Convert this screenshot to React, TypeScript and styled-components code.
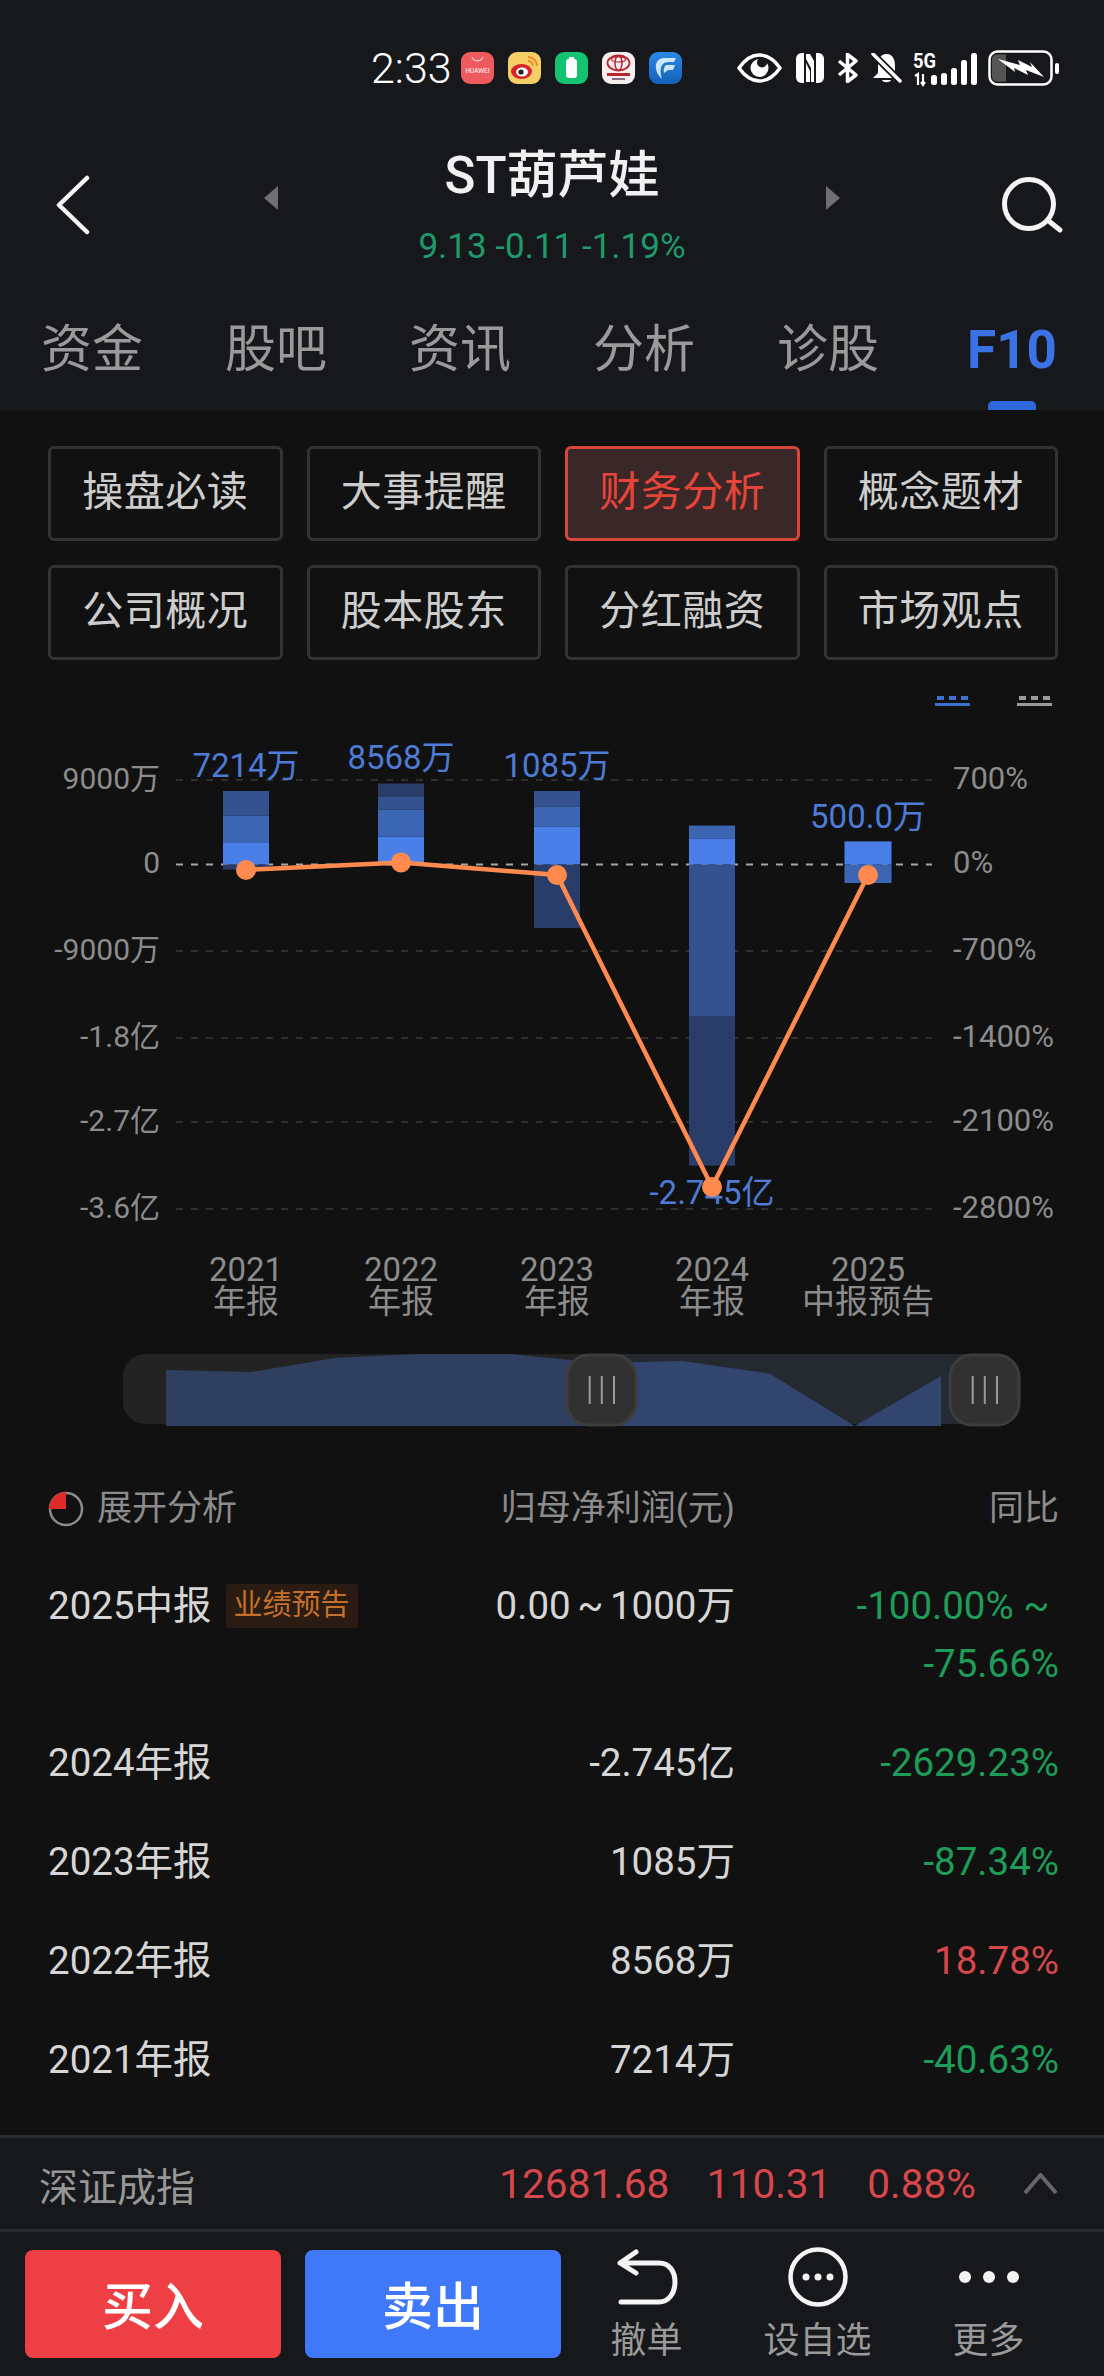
import styled, { createGlobalStyle } from 'styled-components'

const FONT = `Roboto, 'Noto Sans CJK SC', sans-serif`
const GRAY = '#8c8c8c'
const GREEN = '#1e9c58'
const RED = '#d8474c'
const ORANGE = '#ff8a50'

const GlobalStyle = createGlobalStyle`
  html, body {
    margin: 0;
    background: #111;
  }
  * {
    box-sizing: border-box;
  }
`

const Page = styled.div`
  width: 1104px;
  height: 2376px;
  display: flex;
  flex-direction: column;
  overflow: hidden;
  background: #111;
  font-family: ${FONT};
`

const Top = styled.header`
  background: #17181b;
  flex: none;
`

const StatusBar = styled.div`
  height: 100px;
  display: flex;
  align-items: center;
  padding: 36px 0 0 371px;
  color: #fff;
`

const Clock = styled.span`
  width: 90px;
  font-size: 43px;
  font-weight: 300;
  line-height: 48px;
`

const AppIcons = styled.div`
  display: flex;
  gap: 14px;
  margin-right: 55px;
`

const SysIcons = styled.div`
  display: flex;
  align-items: center;
`

const SysIcon = styled.svg<{ $gap?: number }>`
  display: block;
  margin-right: ${p => p.$gap ?? 0}px;
`

const Nav = styled.div`
  height: 170px;
  display: grid;
  grid-template-columns: 264px 14px 1fr 14px 264px;
`

const NavIcon = styled.svg<{ $top: number; $left: number }>`
  display: block;
  margin-top: ${p => p.$top}px;
  margin-left: ${p => p.$left}px;
`

const Quote = styled.div`
  margin-top: 46px;
  text-align: center;
`

const Title = styled.div`
  font-size: 51px;
  font-weight: 500;
  line-height: 60px;
  color: #f1f1f1;
`

const Price = styled.div`
  margin-top: 19px;
  font-size: 35px;
  line-height: 44px;
  color: #1f9a6c;
`

const Tabs = styled.nav`
  height: 140px;
  display: flex;
  padding-top: 50px;
`

const Tab = styled.div<{ $active?: boolean }>`
  position: relative;
  flex: 1;
  height: 90px;
  line-height: 60px;
  text-align: center;
  font-size: ${p => (p.$active ? 53 : 51)}px;
  font-weight: ${p => (p.$active ? 700 : 400)};
  color: ${p => (p.$active ? '#3b73e6' : '#9a9a9a')};

  &::after {
    content: '';
    display: ${p => (p.$active ? 'block' : 'none')};
    position: absolute;
    left: 68px;
    bottom: 0;
    width: 48px;
    height: 9px;
    border-radius: 5px 5px 0 0;
    background: #2f67dc;
  }
`

const Body = styled.main`
  flex: 1;
  min-height: 0;
  overflow: hidden;
`

const Shortcuts = styled.div`
  display: grid;
  grid-template-columns: repeat(4, 1fr);
  gap: 24px;
  padding: 36px 46px 0 48px;
`

const Shortcut = styled.div<{ $active?: boolean }>`
  height: 95px;
  padding-bottom: 11px;
  display: flex;
  align-items: center;
  justify-content: center;
  font-size: 41px;
  letter-spacing: 0.5px;
  border-radius: 6px;
  border: 3px solid ${p => (p.$active ? '#d8453a' : '#333')};
  background: ${p => (p.$active ? '#3a2828' : 'transparent')};
  color: ${p => (p.$active ? '#e8453a' : '#cdcdcd')};
`

const Chart = styled.svg`
  display: block;
  margin-top: 31px;
`

const Overview = styled.svg`
  display: block;
`

const Label = styled.text<{ $color: string; $size?: number }>`
  font-family: ${FONT};
  font-size: ${p => p.$size ?? 31}px;
  fill: ${p => p.$color};
  dominant-baseline: central;
`

const Table = styled.section`
  padding: 36px 45px 0 48px;
`

const Row = styled.div<{ $head?: boolean }>`
  display: grid;
  grid-template-columns: 1fr 260px 324px;
  font-size: ${p => (p.$head ? 35 : 38.5)}px;
  line-height: ${p => (p.$head ? 64 : 58)}px;
  color: ${p => (p.$head ? GRAY : '#d6d6d6')};
  margin-bottom: ${p => (p.$head ? 36 : 41)}px;
`

const RowName = styled.div`
  display: flex;
  align-items: center;
  align-self: start;
  height: 58px;
`

const Expand = styled.div`
  display: flex;
  align-items: center;
  gap: 13px;
`

const Tag = styled.span`
  margin-left: 14px;
  padding: 0 8px;
  height: 44px;
  line-height: 42px;
  font-size: 29px;
  border-radius: 3px;
  color: #c4702a;
  background: #2a1c12;
`

const Amount = styled.div`
  text-align: right;
  word-spacing: -3px;
`

const Change = styled.div<{ $color?: string }>`
  text-align: right;
  color: ${p => p.$color ?? 'inherit'};
`

const Ticker = styled.div`
  flex: none;
  height: 97px;
  display: flex;
  align-items: center;
  padding: 0 46px 0 39px;
  background: #17181b;
  border-top: 3px solid #2a2b2e;
  border-bottom: 3px solid #2a2b2e;
`

const TickerName = styled.span`
  flex: 1;
  font-size: 39px;
  color: #979797;
`

const TickerValue = styled.span<{ $gap: number }>`
  margin-right: ${p => p.$gap}px;
  font-size: 40.5px;
  color: ${RED};
`

const BottomBar = styled.footer`
  flex: none;
  height: 144px;
  display: flex;
  padding: 15px 0 0 25px;
  background: #17181b;
`

const TradeButton = styled.div<{ $color: string }>`
  width: 256px;
  height: 108px;
  margin: 3px 24px 0 0;
  padding-bottom: 2px;
  display: flex;
  align-items: center;
  justify-content: center;
  border-radius: 8px;
  font-size: 51px;
  font-weight: 500;
  color: #fff;
  background: ${p => p.$color};
`

const Actions = styled.div`
  display: flex;
  margin-left: -24px;
`

const Action = styled.div`
  width: 171px;
  display: flex;
  flex-direction: column;
  align-items: center;
  gap: 14px;
  font-size: 36px;
  line-height: 40px;
  color: #9a9a9a;
`

const shortcuts = ['操盘必读', '大事提醒', '财务分析', '概念题材', '公司概况', '股本股东', '分红融资', '市场观点']
const tabs = ['资金', '股吧', '资讯', '分析', '诊股', 'F10']

const ZERO = 863.6
const C1 = '#4a7fe8'
const C2 = '#3c66b4'
const C3 = '#33528f'
const C4 = '#2a3d68'

const years = [
  {
    x: 246, width: 46, label: '7214万', labelY: 764, year: '2021', kind: '年报', point: 869,
    parts: [[790, 814.6, C3], [814.6, 842, C2], [842, ZERO, C1], [ZERO, 868.6, C4]],
  },
  {
    x: 401, width: 46, label: '8568万', labelY: 756, year: '2022', kind: '年报', point: 861.4,
    parts: [[782.5, 796, C4], [796, 808.6, C3], [808.6, 835.7, C2], [835.7, ZERO, C1]],
  },
  {
    x: 557, width: 46, label: '1085万', labelY: 764, year: '2023', kind: '年报', point: 874,
    parts: [[790, 805.7, C3], [805.7, 825.7, C2], [825.7, ZERO, C1], [ZERO, 927, C4]],
  },
  {
    x: 712, width: 46, label: '-2.745亿', labelY: 1191, year: '2024', kind: '年报', point: 1186,
    parts: [[824.6, 837.5, C2], [837.5, ZERO, C1], [ZERO, 1015, C3], [1015, 1164.6, C4]],
  },
  {
    x: 868, width: 47, label: '500.0万', labelY: 815, year: '2025', kind: '中报预告', point: 874,
    parts: [[840.4, ZERO, C1], [ZERO, 882, C2]],
  },
] as { x: number; width: number; label: string; labelY: number; year: string; kind: string; point: number; parts: [number, number, string][] }[]

const grid = [
  { y: 779, left: '9000万', right: '700%' },
  { y: ZERO, left: '0', right: '0%' },
  { y: 950, left: '-9000万', right: '-700%' },
  { y: 1037, left: '-1.8亿', right: '-1400%' },
  { y: 1121, left: '-2.7亿', right: '-2100%' },
  { y: 1208, left: '-3.6亿', right: '-2800%' },
]

const reports = [
  { name: '2024年报', amount: '-2.745亿', change: '-2629.23%', color: GREEN },
  { name: '2023年报', amount: '1085万', change: '-87.34%', color: GREEN },
  { name: '2022年报', amount: '8568万', change: '18.78%', color: RED },
  { name: '2021年报', amount: '7214万', change: '-40.63%', color: GREEN },
]

const LegendMark = ({ x, color }: { x: number; color: string }) => (
  <g fill={color}>
    <rect x={x + 2} y={695} width={7} height={4} />
    <rect x={x + 14} y={695} width={7} height={4} />
    <rect x={x + 26} y={695} width={7} height={4} />
    <rect x={x} y={702} width={35} height={3} />
  </g>
)

const ProfitChart = () => (
  <Chart width={1104} height={640} viewBox="0 690 1104 640">
    <LegendMark x={935} color="#3f6fd0" />
    <LegendMark x={1017} color="#9a9a9a" />

    {grid.map(g => (
      <g key={g.y}>
        <line
          x1={176}
          x2={932}
          y1={g.y}
          y2={g.y}
          stroke={g.y === ZERO ? '#a6a6a6' : '#2f2f2f'}
          strokeWidth={2}
          strokeDasharray="7 8"
        />
        <Label x={160} y={g.y - 2} textAnchor="end" $color={GRAY} $size={30}>
          {g.left}
        </Label>
        <Label x={953} y={g.y - 2} $color={GRAY}>
          {g.right}
        </Label>
      </g>
    ))}

    {years.map(y => (
      <g key={y.year}>
        {y.parts.map(([top, bottom, fill]) => (
          <rect key={top} x={y.x - y.width / 2} y={top} width={y.width} height={bottom - top} fill={fill} />
        ))}
        <Label x={y.x} y={y.labelY} textAnchor="middle" $color="#4d7bd6" $size={33}>
          {y.label}
        </Label>
        <Label x={y.x} y={1268} textAnchor="middle" $color={GRAY} $size={33}>
          {y.year}
        </Label>
        <Label x={y.x} y={1300} textAnchor="middle" $color={GRAY} $size={33}>
          {y.kind}
        </Label>
      </g>
    ))}

    <polyline
      points={years.map(y => `${y.x},${y.point}`).join(' ')}
      fill="none"
      stroke={ORANGE}
      strokeWidth={4.5}
    />
    {years.map(y => (
      <circle key={y.year} cx={y.x} cy={y.point} r={10} fill={ORANGE} />
    ))}
  </Chart>
)

const Handle = ({ x }: { x: number }) => (
  <g>
    <rect x={x} y={1354} width={69} height={70} rx={22} fill="#313131" stroke="#3d3d3d" strokeWidth={3} />
    {[22.7, 34.8, 47].map(d => (
      <line key={d} x1={x + d} x2={x + d} y1={1375} y2={1403} stroke="#9a9a9a" strokeWidth={2} />
    ))}
  </g>
)

const RangeOverview = () => (
  <Overview width={1104} height={110} viewBox="0 1330 1104 110">
    <rect x={123} y={1353} width={897} height={70} rx={22} fill="#232323" />
    <rect x={602} y={1353} width={380} height={70} fill="#252a31" />
    <path d="M166 1369 L251.5 1371 L336 1356.7 L421 1353 L509 1353 L602 1362 V1425 H166 Z" fill="#2f3f5f" />
    <path d="M602 1362 L682 1360 L770 1372.7 L854.5 1425 L941 1375 V1425 H602 Z" fill="#31456f" />
    <Handle x={567} />
    <Handle x={950} />
  </Overview>
)

const StatusApps = () => (
  <AppIcons>
    <svg width={33} height={32} viewBox="0 0 33 32">
      <rect width={33} height={32} rx={9} fill="#ef5a5f" />
      <path d="M11 5 C12 10 21 10 22 5" fill="none" stroke="#fff" strokeWidth={1} />
      <text x={16.5} y={21} textAnchor="middle" fontSize={6.5} fontFamily="Roboto" fill="#fff">
        HUAWEI
      </text>
    </svg>
    <svg width={33} height={32} viewBox="0 0 33 32">
      <rect width={33} height={32} rx={9} fill="#f4cf68" />
      <ellipse cx={13.5} cy={19.5} rx={10.5} ry={7.5} fill="#d8232a" />
      <ellipse cx={14} cy={20} rx={6} ry={4.5} fill="#fff" />
      <circle cx={13} cy={20} r={2.6} fill="#222" />
      <path d="M20 5 A9 9 0 0 1 29 14 M20 9 A5 5 0 0 1 25 14" fill="none" stroke="#ee8a24" strokeWidth={2} />
    </svg>
    <svg width={33} height={32} viewBox="0 0 33 32">
      <rect width={33} height={32} rx={9} fill="#12c472" />
      <rect x={11} y={7} width={11} height={19} rx={3} fill="#fff" />
      <rect x={14} y={5} width={5} height={3} fill="#fff" />
    </svg>
    <svg width={33} height={32} viewBox="0 0 33 32">
      <rect width={33} height={32} rx={9} fill="#f4eeee" />
      <ellipse cx={16.5} cy={11} rx={11} ry={7.5} fill="none" stroke="#b82332" strokeWidth={1.8} />
      <ellipse cx={16.5} cy={11} rx={3.5} ry={7.5} fill="none" stroke="#b82332" strokeWidth={1.5} />
      <ellipse cx={16.5} cy={7.5} rx={7} ry={2.5} fill="none" stroke="#b82332" strokeWidth={1.2} />
      <rect x={5} y={21} width={23} height={3} fill="#b82332" />
      <rect x={10} y={26} width={13} height={2} fill="#8a6a8a" />
    </svg>
    <svg width={33} height={32} viewBox="0 0 33 32">
      <defs>
        <linearGradient id="blueApp" x1="0" y1="0" x2="0" y2="1">
          <stop offset="0" stopColor="#2a8ae6" />
          <stop offset="1" stopColor="#1460b8" />
        </linearGradient>
      </defs>
      <rect width={33} height={32} rx={9} fill="url(#blueApp)" />
      <path d="M27 6 H15 C9 6 6 11 7 17 C8 22 11 25 13 27 C11 21 11 15 14 12 C16 10 19 10 25 10 Z" fill="#cfe6fb" />
      <path d="M26 13 H17 C15 15 14 18 15 21 C17 20 18 18 20 18 H24 Z" fill="#cfe6fb" />
    </svg>
  </AppIcons>
)

const StatusSystem = () => (
  <SysIcons>
    <SysIcon $gap={13} width={45} height={30} viewBox="0 0 45 30">
      <path
        d="M2 15 C9 5 15 2 22.5 2 S36 5 43 15 C36 25 30 28 22.5 28 S9 25 2 15 Z"
        fill="none"
        stroke="#fff"
        strokeWidth={3.5}
        strokeLinejoin="round"
      />
      <circle cx={22.5} cy={15} r={9} fill="#fff" />
      <circle cx={25} cy={9.5} r={5} fill="#17181b" />
    </SysIcon>
    <SysIcon $gap={12} width={30} height={30} viewBox="0 0 30 30">
      <path d="M7 0 H9 V30 H7 C3 30 1 27 1 24 V6 C1 3 3 0 7 0 Z" fill="#fff" />
      <path d="M23 0 H21 V30 H23 C27 30 29 27 29 24 V6 C29 3 27 0 23 0 Z" fill="#fff" />
      <path d="M11 1 H15 L19 8 V29 H16 V15 L11 6 Z" fill="#fff" />
      <path d="M11 10 L15 18 V29 H11 Z" fill="#fff" />
    </SysIcon>
    <SysIcon $gap={13} width={21} height={30} viewBox="0 0 21 30">
      <path d="M2 8 L19 22 L10.5 28.5 V1.5 L19 8 L2 22" fill="none" stroke="#fff" strokeWidth={3.5} strokeLinejoin="round" />
    </SysIcon>
    <SysIcon $gap={11} width={31} height={30} viewBox="0 0 31 30">
      <path d="M15.5 1 C9 1 7 7 7 13 V20 L2 25 H29 L24 20 V13 C24 7 22 1 15.5 1 Z" fill="#fff" />
      <path d="M11 27 H20 C19 30 12 30 11 27 Z" fill="#fff" />
      <path d="M1 0 L30 29" stroke="#17181b" strokeWidth={7} />
      <path d="M2 1 L29 28" stroke="#fff" strokeWidth={3.5} strokeLinecap="round" />
    </SysIcon>
    <SysIcon $gap={11} width={64} height={39} viewBox="0 -3 64 39">
      <text x={0} y={15.5} fontSize={20} fontWeight={700} fontFamily="Roboto" fill="#fff" textLength={23} lengthAdjust="spacingAndGlyphs">
        5G
      </text>
      <path d="M2 24 L5 22 V33 M10 22 V33 M8 30 L10 33 L12 30" fill="none" stroke="#fff" strokeWidth={2.2} />
      <rect x={18} y={23} width={6} height={10} rx={2.5} fill="#fff" />
      <rect x={28} y={21} width={6} height={12} rx={2.5} fill="#fff" />
      <rect x={38} y={16} width={6} height={17} rx={2.5} fill="#fff" />
      <rect x={48} y={8} width={6} height={25} rx={2.5} fill="#fff" />
      <rect x={58} y={1} width={6} height={32} rx={2.5} fill="#fff" />
    </SysIcon>
    <svg width={71} height={36} viewBox="0 0 71 36">
      <rect x={1.5} y={1.5} width={62} height={33} rx={8} fill="none" stroke="#fff" strokeWidth={2.5} />
      <path d="M4 10 C4 6 6 4.5 9 4.5 H18 V31.5 H9 C6 31.5 4 30 4 26 Z" fill="#555" />
      <path d="M10 9 L32 15 L30 10 L44 17 L42 12 L56 27 L38 20 L40 25 L26 18 L27 22 Z" fill="#fff" />
      <rect x={67} y={13} width={4} height={11} rx={2} fill="#fff" />
    </svg>
  </SysIcons>
)

export default function App() {
  return (
    <Page>
      <GlobalStyle />
      <Top>
        <StatusBar>
          <Clock>2:33</Clock>
          <StatusApps />
          <StatusSystem />
        </StatusBar>

        <Nav>
          <NavIcon $top={75} $left={54} width={38} height={60} viewBox="0 0 38 60">
            <path d="M33 3 L5 30 L33 57" fill="none" stroke="#f4f4f4" strokeWidth={4.5} strokeLinecap="round" strokeLinejoin="round" />
          </NavIcon>
          <NavIcon $top={86} $left={0} width={14} height={24} viewBox="0 0 14 24">
            <path d="M14 0 V24 L0 12 Z" fill="#707070" />
          </NavIcon>
          <Quote>
            <Title>ST葫芦娃</Title>
            <Price>9.13 -0.11 -1.19%</Price>
          </Quote>
          <NavIcon $top={86} $left={0} width={14} height={24} viewBox="0 0 14 24">
            <path d="M0 0 V24 L14 12 Z" fill="#707070" />
          </NavIcon>
          <NavIcon $top={75} $left={160} width={66} height={60} viewBox="0 0 66 60">
            <circle cx={29} cy={29} r={24.5} fill="none" stroke="#f4f4f4" strokeWidth={5} />
            <path d="M50 47 L60 55" stroke="#f4f4f4" strokeWidth={5} strokeLinecap="round" />
          </NavIcon>
        </Nav>

        <Tabs>
          {tabs.map(t => (
            <Tab key={t} $active={t === 'F10'}>
              {t}
            </Tab>
          ))}
        </Tabs>
      </Top>

      <Body>
        <Shortcuts>
          {shortcuts.map(s => (
            <Shortcut key={s} $active={s === '财务分析'}>
              {s}
            </Shortcut>
          ))}
        </Shortcuts>

        <ProfitChart />
        <RangeOverview />

        <Table>
          <Row $head>
            <Expand>
              <svg width={36} height={36} viewBox="0 0 36 36">
                <circle cx={18} cy={18} r={16} fill="none" stroke="#8c8c8c" strokeWidth={2.5} />
                <path d="M18 18 V1 A17 17 0 0 0 1 18 Z" fill="#e02a2a" />
              </svg>
              展开分析
            </Expand>
            <Amount>归母净利润(元)</Amount>
            <Change>同比</Change>
          </Row>

          <Row>
            <RowName>
              2025中报
              <Tag>业绩预告</Tag>
            </RowName>
            <Amount>0.00 ~ 1000万</Amount>
            <Change $color={GREEN}>-100.00% ~{'\u00a0'} -75.66%</Change>
          </Row>

          {reports.map(r => (
            <Row key={r.name}>
              <RowName>{r.name}</RowName>
              <Amount>{r.amount}</Amount>
              <Change $color={r.color}>{r.change}</Change>
            </Row>
          ))}
        </Table>
      </Body>

      <Ticker>
        <TickerName>深证成指</TickerName>
        <TickerValue $gap={37.5}>12681.68</TickerValue>
        <TickerValue $gap={36}>110.31</TickerValue>
        <TickerValue $gap={47}>0.88%</TickerValue>
        <svg width={35} height={22} viewBox="0 0 35 22">
          <path d="M2 20 L17.5 2 L33 20" fill="none" stroke="#666" strokeWidth={4} />
        </svg>
      </Ticker>

      <BottomBar>
        <TradeButton $color="#ee3f45">买入</TradeButton>
        <TradeButton $color="#3f78f8">卖出</TradeButton>
        <Actions>
          <Action>
            <svg width={64} height={60} viewBox="0 0 64 60">
              <path
                d="M21 5 L5 16 L21 26 M5 16 H44 C54 16 60 24 60 35 C60 47 53 55 44 55 H6"
                fill="none"
                stroke="#f4f4f4"
                strokeWidth={5}
                strokeLinecap="round"
                strokeLinejoin="round"
              />
            </svg>
            撤单
          </Action>
          <Action>
            <svg width={60} height={60} viewBox="0 0 60 60">
              <circle cx={30} cy={30} r={27.5} fill="none" stroke="#f4f4f4" strokeWidth={4.5} />
              <circle cx={18} cy={30} r={3.5} fill="#f4f4f4" />
              <circle cx={30} cy={30} r={3.5} fill="#f4f4f4" />
              <circle cx={42} cy={30} r={3.5} fill="#f4f4f4" />
            </svg>
            设自选
          </Action>
          <Action>
            <svg width={62} height={60} viewBox="0 0 62 60">
              <circle cx={7} cy={30} r={6} fill="#f4f4f4" />
              <circle cx={31} cy={30} r={6} fill="#f4f4f4" />
              <circle cx={55} cy={30} r={6} fill="#f4f4f4" />
            </svg>
            更多
          </Action>
        </Actions>
      </BottomBar>
    </Page>
  )
}
